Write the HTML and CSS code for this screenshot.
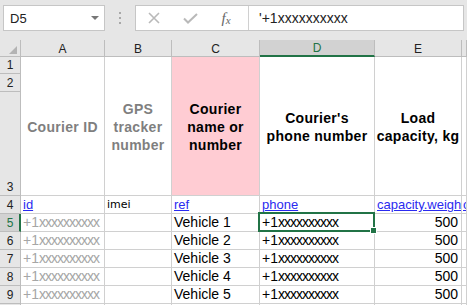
FILE: index.html
```html
<!DOCTYPE html>
<html>
<head>
<meta charset="utf-8">
<link rel="stylesheet" href="styles.css">
</head>
<body>
<div class="app">
  <div class="toolbar">
    <div class="namebox"><span class="nb-text">D5</span><span class="nb-arrow"></span></div>
    <div class="dots"><i></i><i></i><i></i></div>
    <div class="fbar">
      <div class="fbtns">
        <span class="fbtn"><svg width="12" height="12" viewBox="0 0 12 12"><path d="M1 1 L11 11 M11 1 L1 11" stroke="#b9b9b9" stroke-width="1.6" fill="none"/></svg></span>
        <span class="fbtn"><svg width="15" height="11" viewBox="0 0 15 11"><path d="M1 5.5 L5 9.5 L14 1" stroke="#b9b9b9" stroke-width="2" fill="none"/></svg></span>
        <span class="fbtn fx"><i>f</i><span class="fx-x">x</span></span>
      </div>
      <div class="finput">'+1xxxxxxxxxx</div>
    </div>
  </div>
  <div class="sheet">
    <div class="corner"><span class="tri"></span></div>
    <div class="ch">A</div>
    <div class="ch">B</div>
    <div class="ch">C</div>
    <div class="ch sel">D</div>
    <div class="ch">E</div>
    <div class="ch"></div>

    <div class="rh r1">1</div>
    <div class="rh r2">2</div>
    <div class="rh r3">3</div>
    <div class="c hd gray colA">Courier ID</div>
    <div class="c hd gray colB">GPS<br>tracker<br>number</div>
    <div class="c hd pink colC">Courier<br>name or<br>number</div>
    <div class="c hd colD">Courier's<br>phone number</div>
    <div class="c hd colE">Load<br>capacity, kg</div>
    <div class="c hd colF"></div>

    <div class="rh">4</div>
    <div class="c link">id</div>
    <div class="c imei">imei</div>
    <div class="c link">ref</div>
    <div class="c link">phone</div>
    <div class="c link">capacity.weigh</div>
    <div class="c link fcol">c</div>

    <div class="rh sel">5</div>
    <div class="c num gray2">+1<span class="xs">xxxxxxxxxx</span></div>
    <div class="c"></div>
    <div class="c txt">Vehicle 1</div>
    <div class="c num active">+1<span class="xs">xxxxxxxxxx</span><span class="selbox"></span><span class="handle"></span></div>
    <div class="c txt right">500</div>
    <div class="c"></div>

    <div class="rh">6</div>
    <div class="c num gray2">+1<span class="xs">xxxxxxxxxx</span></div>
    <div class="c"></div>
    <div class="c txt">Vehicle 2</div>
    <div class="c num">+1<span class="xs">xxxxxxxxxx</span></div>
    <div class="c txt right">500</div>
    <div class="c"></div>

    <div class="rh">7</div>
    <div class="c num gray2">+1<span class="xs">xxxxxxxxxx</span></div>
    <div class="c"></div>
    <div class="c txt">Vehicle 3</div>
    <div class="c num">+1<span class="xs">xxxxxxxxxx</span></div>
    <div class="c txt right">500</div>
    <div class="c"></div>

    <div class="rh">8</div>
    <div class="c num gray2">+1<span class="xs">xxxxxxxxxx</span></div>
    <div class="c"></div>
    <div class="c txt">Vehicle 4</div>
    <div class="c num">+1<span class="xs">xxxxxxxxxx</span></div>
    <div class="c txt right">500</div>
    <div class="c"></div>

    <div class="rh">9</div>
    <div class="c num gray2">+1<span class="xs">xxxxxxxxxx</span></div>
    <div class="c"></div>
    <div class="c txt">Vehicle 5</div>
    <div class="c num">+1<span class="xs">xxxxxxxxxx</span></div>
    <div class="c txt right">500</div>
    <div class="c"></div>

    <div class="rh"></div>
    <div class="c"></div>
    <div class="c"></div>
    <div class="c"></div>
    <div class="c"></div>
    <div class="c"></div>
    <div class="c"></div>
  </div>
</div>
</body>
</html>
```

FILE: styles.css
```css
html, body {
  margin: 0;
  padding: 0;
  background: #e6e6e6;
  overflow: hidden;
}
.app {
  width: 467px;
  height: 305px;
  overflow: hidden;
  font-family: "Liberation Sans", Arial, sans-serif;
}
.toolbar {
  height: 40px;
  box-sizing: border-box;
  padding-top: 5px;
  display: flex;
  align-items: flex-start;
  background: #e6e6e6;
}
.namebox {
  margin-left: 3px;
  width: 102px;
  height: 26px;
  box-sizing: border-box;
  border: 1px solid #c6c6c6;
  background: #fff;
  display: flex;
  align-items: center;
  padding-left: 6px;
  font-size: 13px;
  color: #222;
}
.nb-arrow {
  margin-left: auto;
  margin-right: 5px;
  width: 0;
  height: 0;
  border-left: 4px solid transparent;
  border-right: 4px solid transparent;
  border-top: 4px solid #777;
}
.dots {
  width: 30px;
  height: 26px;
  display: flex;
  flex-direction: column;
  align-items: center;
  justify-content: center;
  gap: 3px;
}
.dots i {
  display: block;
  width: 2px;
  height: 2px;
  background: #a8a8a8;
}
.fbar {
  width: 329px;
  height: 26px;
  box-sizing: border-box;
  border: 1px solid #c6c6c6;
  background: #fff;
  display: flex;
}
.fbtns {
  width: 112px;
  display: flex;
  align-items: center;
  border-right: 1px solid #d0d0d0;
}
.fbtn {
  width: 36px;
  height: 24px;
  display: flex;
  align-items: center;
  justify-content: center;
}
.fx {
  font-family: "Liberation Serif", serif;
  font-style: italic;
  color: #666;
  font-size: 15px;
}
.fx i { font-style: italic; }
.fx-x { font-size: 11px; position: relative; top: 2px; }
.finput {
  flex: 1;
  padding-left: 10px;
  display: flex;
  align-items: center;
  font-size: 14px;
  color: #222;
}

.sheet {
  display: grid;
  grid-template-columns: 21px 84px 67px 88px 115px 87px 1fr;
  grid-template-rows: 17px 17px 18px 104px repeat(7, 18px);
  background: #fff;
}
.corner, .ch, .rh {
  background: #e6e6e6;
  box-sizing: border-box;
  border-right: 1px solid #bdbdbd;
  border-bottom: 1px solid #bdbdbd;
  font-size: 12px;
  color: #222;
}
.corner {
  position: relative;
}
.tri {
  position: absolute;
  right: 3px;
  bottom: 2px;
  width: 0;
  height: 0;
  border-left: 8px solid transparent;
  border-bottom: 8px solid #b3b3b3;
}
.ch {
  display: flex;
  align-items: center;
  justify-content: center;
  padding-top: 1px;
}
.ch.sel {
  background: #d2d2d2;
  color: #217346;
  border-bottom: 2px solid #217346;
}
.rh {
  grid-column: 1;
  display: flex;
  align-items: flex-end;
  justify-content: center;
  line-height: 16px;
}
.rh.r1 { grid-row: 2; }
.rh.r2 { grid-row: 3; }
.rh.r3 { grid-row: 4; }
.rh.sel {
  background: #d2d2d2;
  color: #217346;
  border-right: 2px solid #217346;
  padding-left: 1px;
}
.c {
  box-sizing: border-box;
  border-right: 1px solid #d0d0d0;
  border-bottom: 1px solid #d0d0d0;
  background: #fff;
  white-space: nowrap;
  overflow: hidden;
  display: flex;
  align-items: flex-end;
  padding: 0 2px;
  font-size: 14px;
  line-height: 17px;
  color: #000;
}
.hd {
  grid-row: 2 / span 3;
  align-items: center;
  justify-content: center;
  text-align: center;
  font-weight: bold;
  line-height: 18px;
  letter-spacing: 0.3px;
  white-space: nowrap;
  padding: 1px 0 0;
}
.colA { grid-column: 2; }
.colB { grid-column: 3; }
.colC { grid-column: 4; }
.colD { grid-column: 5; }
.colE { grid-column: 6; }
.colF { grid-column: 7; }
.hd.gray { color: #7f7f7f; }
.hd.pink { background: #ffccd3; }
.link {
  color: #2a2af0;
  text-decoration: underline;
  font-size: 13px;
  line-height: 16px;
}
.fcol { padding-left: 1px; }
.imei {
  font-family: "DejaVu Sans", sans-serif;
  font-size: 11px;
  line-height: 16px;
}
.num .xs { letter-spacing: -1px; }
.gray2 { color: #a6a6a6; }
.right { justify-content: flex-end; padding-right: 3px; }
.active {
  overflow: visible;
  position: relative;
}
.selbox {
  position: absolute;
  left: -2px;
  top: -2px;
  right: -1px;
  bottom: -1px;
  border: 2px solid #217346;
  pointer-events: none;
}
.handle {
  position: absolute;
  right: -3px;
  bottom: -3px;
  width: 5px;
  height: 5px;
  background: #217346;
  border: 1px solid #fff;
}
```
